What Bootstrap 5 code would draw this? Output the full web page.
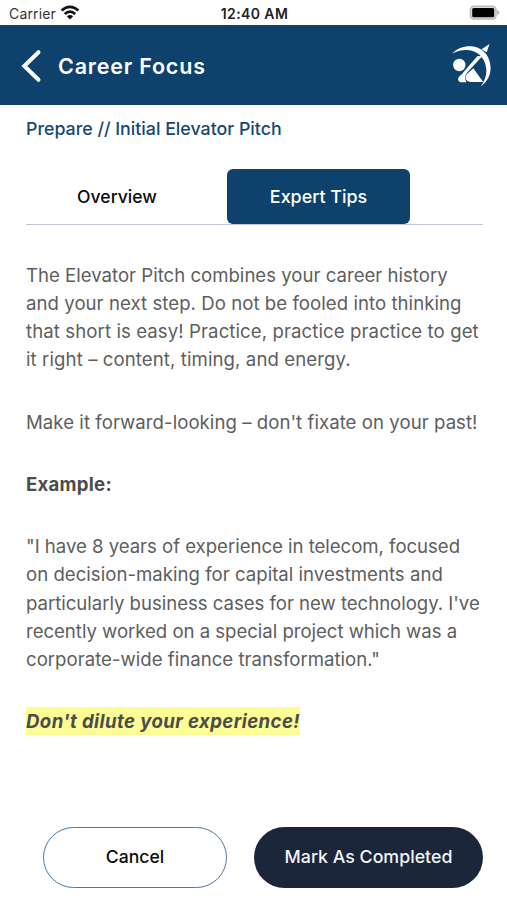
<!DOCTYPE html>
<html lang="en">
<head>
<meta charset="utf-8">
<meta name="viewport" content="width=device-width, initial-scale=1">
<title>Career Focus</title>
<link href="https://cdn.jsdelivr.net/npm/bootstrap@5.3.0/dist/css/bootstrap.min.css" rel="stylesheet">
<style>
body{font-family:Inter,"Liberation Sans",sans-serif;color:#5e5e5e;font-size:18.6px;line-height:28.1px;background:#fff}
.screen{width:507px;height:900px;overflow:hidden}
.statusbar{height:25px;color:#333;font-size:14px;line-height:27px;padding:0 7px 0 9px}
.statusbar>*{flex:1 1 0}
.carrier{letter-spacing:.15px;padding-top:1px}
.clock{color:#222;font-weight:600;letter-spacing:.4px}
.appbar{height:80px;background:#0e426d;color:#fff;padding:0 15px 0 20px}
.appbar h1{font-size:21.5px;font-weight:600;letter-spacing:.8px;line-height:30px;margin:1px 0 0 16px}
.appbar .btn{line-height:0;margin-top:2px}
.trail{color:#164873;font-size:17.8px;font-weight:500;padding:0 26px;height:46px;line-height:47px}
.tabs{margin:18px 24px 0 26px;border-bottom:1px solid #c5c2da;height:56px}
.tabs .nav-link{height:55px;width:182px;color:#0b0b0b;font-size:17.6px;font-weight:500;padding:0;line-height:56px;text-align:center}
.tabs .nav-link.active{width:183px;margin-left:19px;background:#0e426d;color:#fff;font-size:17.9px;border-radius:6px}
.copy{padding:35.5px 0 0 26px;white-space:nowrap}
.copy p{margin:0 0 34px}
.copy .intro{margin-bottom:35px}
.copy .label-row{margin-bottom:34.3px}
.copy .quote{margin-bottom:33.7px}
.copy p span{display:block}
.t1{letter-spacing:.05px}
.t2{letter-spacing:.09px}
.t3{letter-spacing:.02px}
.t4{letter-spacing:-.03px}
.copy strong{color:#4c4c4c;letter-spacing:.25px}
.copy .hl{display:inline-block;background:#fdfd96;letter-spacing:.4px}
.actions{padding:0 24px 0 43px;margin-top:auto;margin-bottom:12px}
.actions .btn{height:61px;font-weight:500;padding:0}
.cancel{width:184px;border:1.4px solid #4a7ba3;color:#0b0b0b;font-size:17.6px}
.done{width:229px;background:#1b263a;color:#f1f4f8;font-size:17.8px}
</style>
</head>
<body>
<main class="screen d-flex flex-column">
<div class="statusbar d-flex">
  <div class="d-flex align-items-center"><span class="carrier">Carrier</span>
    <svg class="ms-1" width="20" height="15" viewBox="0 0 20 15" fill="none" stroke="#111" stroke-width="2.7"><path d="M1.6 5.6Q10-1.9 18.4 5.6M4.7 8.9Q10 4.2 15.3 8.9"/><path d="M10 14.5 6.8 11.3Q10 8.6 13.2 11.3Z" fill="#111" stroke="none"/></svg>
  </div>
  <div class="clock text-center">12:40 AM</div>
  <div class="d-flex align-items-center justify-content-end">
    <svg width="31" height="15" viewBox="0 0 31 15"><rect x="1.4" y="1.2" width="25.6" height="12.8" rx="3.6" fill="#ddd" stroke="#bdbdbd" stroke-width="1.6"/><rect x="3.2" y="3" width="22" height="9.3" rx="1.5" fill="#000"/><path d="M28 5Q30.6 5.7 30.6 7.6T28 10.2Z" fill="#bdbdbd"/></svg>
  </div>
</div>
<header class="appbar d-flex align-items-center">
  <button class="btn p-0 border-0" aria-label="Back"><svg width="22" height="34" viewBox="0 0 22 34" fill="none" stroke="#fff" stroke-width="4" stroke-linecap="round"><path d="M18.5 3.2 4.3 17 18.5 30.8"/></svg></button>
  <h1>Career Focus</h1>
  <svg class="ms-auto" width="42" height="46" viewBox="450 42 42 46" fill="#fff"><path d="M452.3 53.5C465 40.5 490.5 45 490.6 68.5 490.5 75.5 487 82 481 86.3 485 80 487 74 486.2 68.5 484.5 51.5 468 45.5 452.3 53.5Z"/><path d="M489.5 44 486.7 52.3 481.5 49.3Z"/><path d="M477.5 56 482.5 56 468.3 71.3C465 74.800 464.300 78.500 466.500 82.300H462.300C457.300 82.300 456.800 78 460.600 75.200 462.300 73.800 463.200 72.500 464.200 71.200Z"/><circle cx="459.3" cy="65" r="6.200"/><path d="M473.300 68.300 483.200 82H471.500C464.800 82 464.200 76.200 467.800 73.200Z"/></svg>
</header>
<div class="trail">Prepare // Initial Elevator Pitch</div>
<nav class="tabs nav">
  <a class="nav-link" href="#">Overview</a>
  <a class="nav-link active" href="#">Expert Tips</a>
</nav>
<article class="copy">
  <p class="intro"><span>The Elevator Pitch combines your career history</span><span class="t1">and your next step. Do not be fooled into thinking</span><span class="t2">that short is easy! Practice, practice practice to get</span><span class="t2">it right – content, timing, and energy.</span></p>
  <p class="t1">Make it forward-looking – don't fixate on your past!</p>
  <p class="label-row"><strong>Example:</strong></p>
  <p class="quote"><span class="t4">"I have 8 years of experience in telecom, focused</span><span class="t3">on decision-making for capital investments and</span><span class="t4">particularly business cases for new technology. I've</span><span class="t4">recently worked on a special project which was a</span><span class="t3">corporate-wide finance transformation."</span></p>
  <p class="mb-0"><strong class="hl fst-italic">Don't dilute your experience!</strong></p>
</article>
<div class="actions d-flex justify-content-between">
  <button class="btn rounded-pill cancel">Cancel</button>
  <button class="btn rounded-pill done">Mark As Completed</button>
</div>
</main>
<script src="https://cdn.jsdelivr.net/npm/bootstrap@5.3.0/dist/js/bootstrap.bundle.min.js"></script>
</body>
</html>
